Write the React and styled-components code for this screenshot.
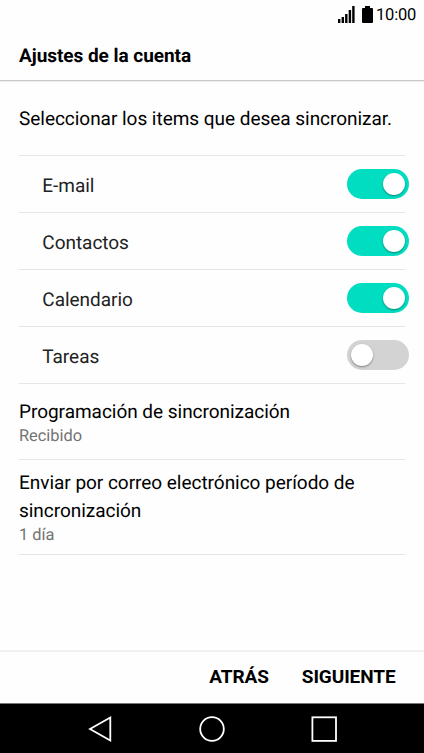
import React, { useState } from "react";
import styled, { createGlobalStyle } from "styled-components";

const SYNC_ITEMS = [
	{ id: "email", label: "E-mail", on: true },
	{ id: "contacts", label: "Contactos", on: true },
	{ id: "calendar", label: "Calendario", on: true },
	{ id: "tasks", label: "Tareas", on: false },
];

function App() {
	const [items, setItems] = useState(SYNC_ITEMS);

	const toggleItem = (id) => {
		setItems(
			items.map((item) => (item.id === id ? { ...item, on: !item.on } : item))
		);
	};

	return (
		<>
			<GlobalStyles />
			<ScreenStyles>
				<StatusBar>
					<svg width="17" height="17" viewBox="0 0 17 17">
						<path
							d="M0 13h2.4v4H0zM3.6 11H6v6H3.6zM7.1 8h2.4v9H7.1zM10.7 4h2.4v13h-2.4zM14.2 0h2.4v17h-2.4z"
							fill="#000"
						/>
					</svg>
					<svg width="11" height="17" viewBox="0 0 11 17">
						<path
							d="M3 0h5v2h2q1 0 1 1v13q0 1-1 1H1q-1 0-1-1V3q0-1 1-1h2z"
							fill="#000"
						/>
					</svg>
					<Clock>10:00</Clock>
				</StatusBar>

				<Header>
					<h1>Ajustes de la cuenta</h1>
				</Header>

				<Content>
					<Intro>Seleccionar los items que desea sincronizar.</Intro>

					{items.map((item) => (
						<SyncRow key={item.id}>
							<span>{item.label}</span>
							<Toggle
								type="button"
								role="switch"
								aria-label={item.label}
								aria-checked={item.on}
								$on={item.on}
								onClick={() => toggleItem(item.id)}
							>
								<Knob />
							</Toggle>
						</SyncRow>
					))}

					<Setting $height="76px" $top="14px">
						<SettingTitle>Programación de sincronización</SettingTitle>
						<SettingValue>Recibido</SettingValue>
					</Setting>
					<Setting $height="95px" $top="9px">
						<SettingTitle>
							Enviar por correo electrónico período de sincronización
						</SettingTitle>
						<SettingValue>1 día</SettingValue>
					</Setting>
				</Content>

				<Footer>
					<FooterButton type="button">ATRÁS</FooterButton>
					<FooterButton type="button">SIGUIENTE</FooterButton>
				</Footer>

				<NavBar>
					<svg width="26" height="28" viewBox="0 0 26 28">
						<path d="M3 14L23.3 2.5v23z" />
					</svg>
					<svg width="28" height="28" viewBox="0 0 28 28">
						<circle cx="14" cy="14" r="11.8" />
					</svg>
					<svg width="28" height="28" viewBox="0 0 28 28">
						<rect x="2.4" y="2.3" width="23.6" height="23.6" />
					</svg>
				</NavBar>
			</ScreenStyles>
		</>
	);
}

export default App;

const GlobalStyles = createGlobalStyle`
	* {
		box-sizing: border-box;
	}

	body {
		margin: 0;
		background: #fff;
		font-family: Roboto, sans-serif;
		color: #000;
		text-rendering: geometricPrecision;
	}

	button {
		padding: 0;
		border: 0;
		background: none;
		font: inherit;
		color: inherit;
		cursor: pointer;
	}
`;

const ScreenStyles = styled.div`
	display: flex;
	flex-direction: column;
	width: 424px;
	height: 753px;
	background: #fefefe;
	overflow: hidden;
`;

const StatusBar = styled.div`
	display: flex;
	justify-content: flex-end;
	align-items: center;
	height: 28px;
	padding-right: 8px;

	svg {
		margin-right: 7px;
	}

	svg + svg {
		margin-right: 3px;
	}
`;

const Clock = styled.span`
	width: 40px;
	font-size: 16.5px;
	line-height: 26px;
	padding-top: 3px;
	letter-spacing: -0.2px;
	white-space: nowrap;
`;

const Header = styled.header`
	display: flex;
	align-items: center;
	height: 53px;
	padding: 3px 19px 0;
	border-bottom: 1px solid #c8c8c8;
	box-shadow: 0 1px 1px #ececec;

	h1 {
		margin: 0;
		font-size: 19px;
		font-weight: 700;
		line-height: 24px;
		letter-spacing: -0.04px;
	}
`;

const Content = styled.main`
	flex: 1;
	padding: 0 19px;
`;

const Intro = styled.p`
	height: 75px;
	margin: 0;
	padding-top: 25px;
	border-bottom: 1px solid #e6e6e6;
	font-size: 19px;
	line-height: 26px;
	letter-spacing: -0.03px;
	white-space: nowrap;
`;

const SyncRow = styled.div`
	display: flex;
	justify-content: space-between;
	align-items: center;
	height: 57px;
	padding-left: 23.3px;
	border-bottom: 1px solid #e6e6e6;
	color: #222;
	font-size: 19px;
	line-height: 26px;
	letter-spacing: -0.03px;

	span {
		padding-top: 3px;
	}
`;

const Toggle = styled.button`
	display: flex;
	justify-content: ${(props) => (props.$on ? "flex-end" : "flex-start")};
	width: 62px;
	height: 30px;
	margin-right: -4px;
	padding: 4px;
	border-radius: 15px;
	background: ${(props) => (props.$on ? "#00ddc1" : "#d3d3d3")};
`;

const Knob = styled.i`
	width: 22px;
	height: 22px;
	border-radius: 50%;
	background: #fff;
	box-shadow: 0 1px 2px rgba(0, 0, 0, 0.4);
`;

const Setting = styled.section`
	height: ${(props) => props.$height};
	padding-top: ${(props) => props.$top};
	border-bottom: 1px solid #e6e6e6;
`;

const SettingTitle = styled.div`
	font-size: 19px;
	line-height: 27.5px;
	letter-spacing: -0.03px;
`;

const SettingValue = styled.div`
	padding-top: 1.5px;
	color: #737373;
	font-size: 16.4px;
	line-height: 20px;
`;

const Footer = styled.footer`
	display: flex;
	justify-content: flex-end;
	align-items: center;
	gap: 33px;
	height: 53px;
	padding: 0 28.5px 2px 0;
	border-top: 2px solid #f0f0f0;
`;

const FooterButton = styled.button`
	font-size: 19px;
	font-weight: 700;
	line-height: 24px;
	letter-spacing: -0.1px;
`;

const NavBar = styled.nav`
	display: flex;
	justify-content: space-between;
	align-items: center;
	height: 50px;
	padding: 0 86px 0 87px;
	border-top: 1px solid #777;
	background: #000;

	svg {
		fill: none;
		stroke: #fff;
		stroke-width: 1.8;
	}
`;
